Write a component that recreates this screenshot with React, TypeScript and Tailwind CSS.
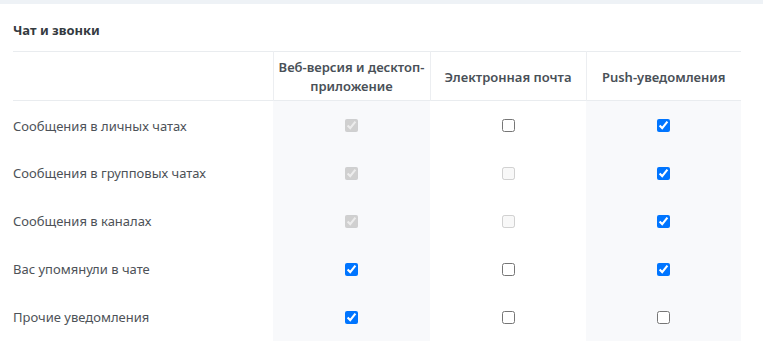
type Row = {
  label: string
  web: { checked: boolean; disabled?: boolean }
  email: { checked: boolean; disabled?: boolean }
  push: { checked: boolean; disabled?: boolean }
}

const rows: Row[] = [
  {
    label: 'Сообщения в личных чатах',
    web: { checked: true, disabled: true },
    email: { checked: false },
    push: { checked: true },
  },
  {
    label: 'Сообщения в групповых чатах',
    web: { checked: true, disabled: true },
    email: { checked: false, disabled: true },
    push: { checked: true },
  },
  {
    label: 'Сообщения в каналах',
    web: { checked: true, disabled: true },
    email: { checked: false, disabled: true },
    push: { checked: true },
  },
  {
    label: 'Вас упомянули в чате',
    web: { checked: true },
    email: { checked: false },
    push: { checked: true },
  },
  {
    label: 'Прочие уведомления',
    web: { checked: true },
    email: { checked: false },
    push: { checked: false },
  },
]

function Check({ checked, disabled }: { checked: boolean; disabled?: boolean }) {
  return (
    <input
      type="checkbox"
      defaultChecked={checked}
      disabled={disabled}
      className="m-0 size-[13px] align-middle"
    />
  )
}

export default function App() {
  return (
    <div className="min-h-[356px] bg-white font-['Noto_Sans',sans-serif] text-[13px]">
      <div className="h-[4px] bg-[#eef2f6]" />
      <div className="px-[13px]">
        <h2 className="pt-[17px] pb-[12px] text-[13px] leading-[18px] font-bold text-[#343a40]">
          Чат и звонки
        </h2>
        <table className="w-[728px] table-fixed border-collapse">
          <colgroup>
            <col className="w-[260px]" />
            <col className="w-[157px]" />
            <col className="w-[156px]" />
            <col className="w-[155px]" />
          </colgroup>
          <thead>
            <tr className="h-[49px] border-y border-[#e9ecef]">
              <th className="border-r border-[#eceef1]" />
              <th className="border-r border-[#eceef1] px-1 pt-[6px] pb-[4px] text-center leading-[19px] font-semibold text-[#495057]">
                Веб-версия и десктоп-приложение
              </th>
              <th className="border-r border-[#eceef1] px-1 pt-[2px] text-center leading-[19px] font-semibold text-[#495057]">
                Электронная почта
              </th>
              <th className="px-1 pt-[2px] text-center leading-[19px] font-semibold text-[#495057]">
                Push-уведомления
              </th>
            </tr>
          </thead>
          <tbody>
            {rows.map((r) => (
              <tr key={r.label} className="h-[48px]">
                <td className="pt-[3px] text-left text-[#4d5258]">{r.label}</td>
                <td className="bg-[#f8f9fb] text-center">
                  <Check {...r.web} />
                </td>
                <td className="text-center">
                  <Check {...r.email} />
                </td>
                <td className="bg-[#f8f9fb] text-center">
                  <Check {...r.push} />
                </td>
              </tr>
            ))}
          </tbody>
        </table>
      </div>
    </div>
  )
}
